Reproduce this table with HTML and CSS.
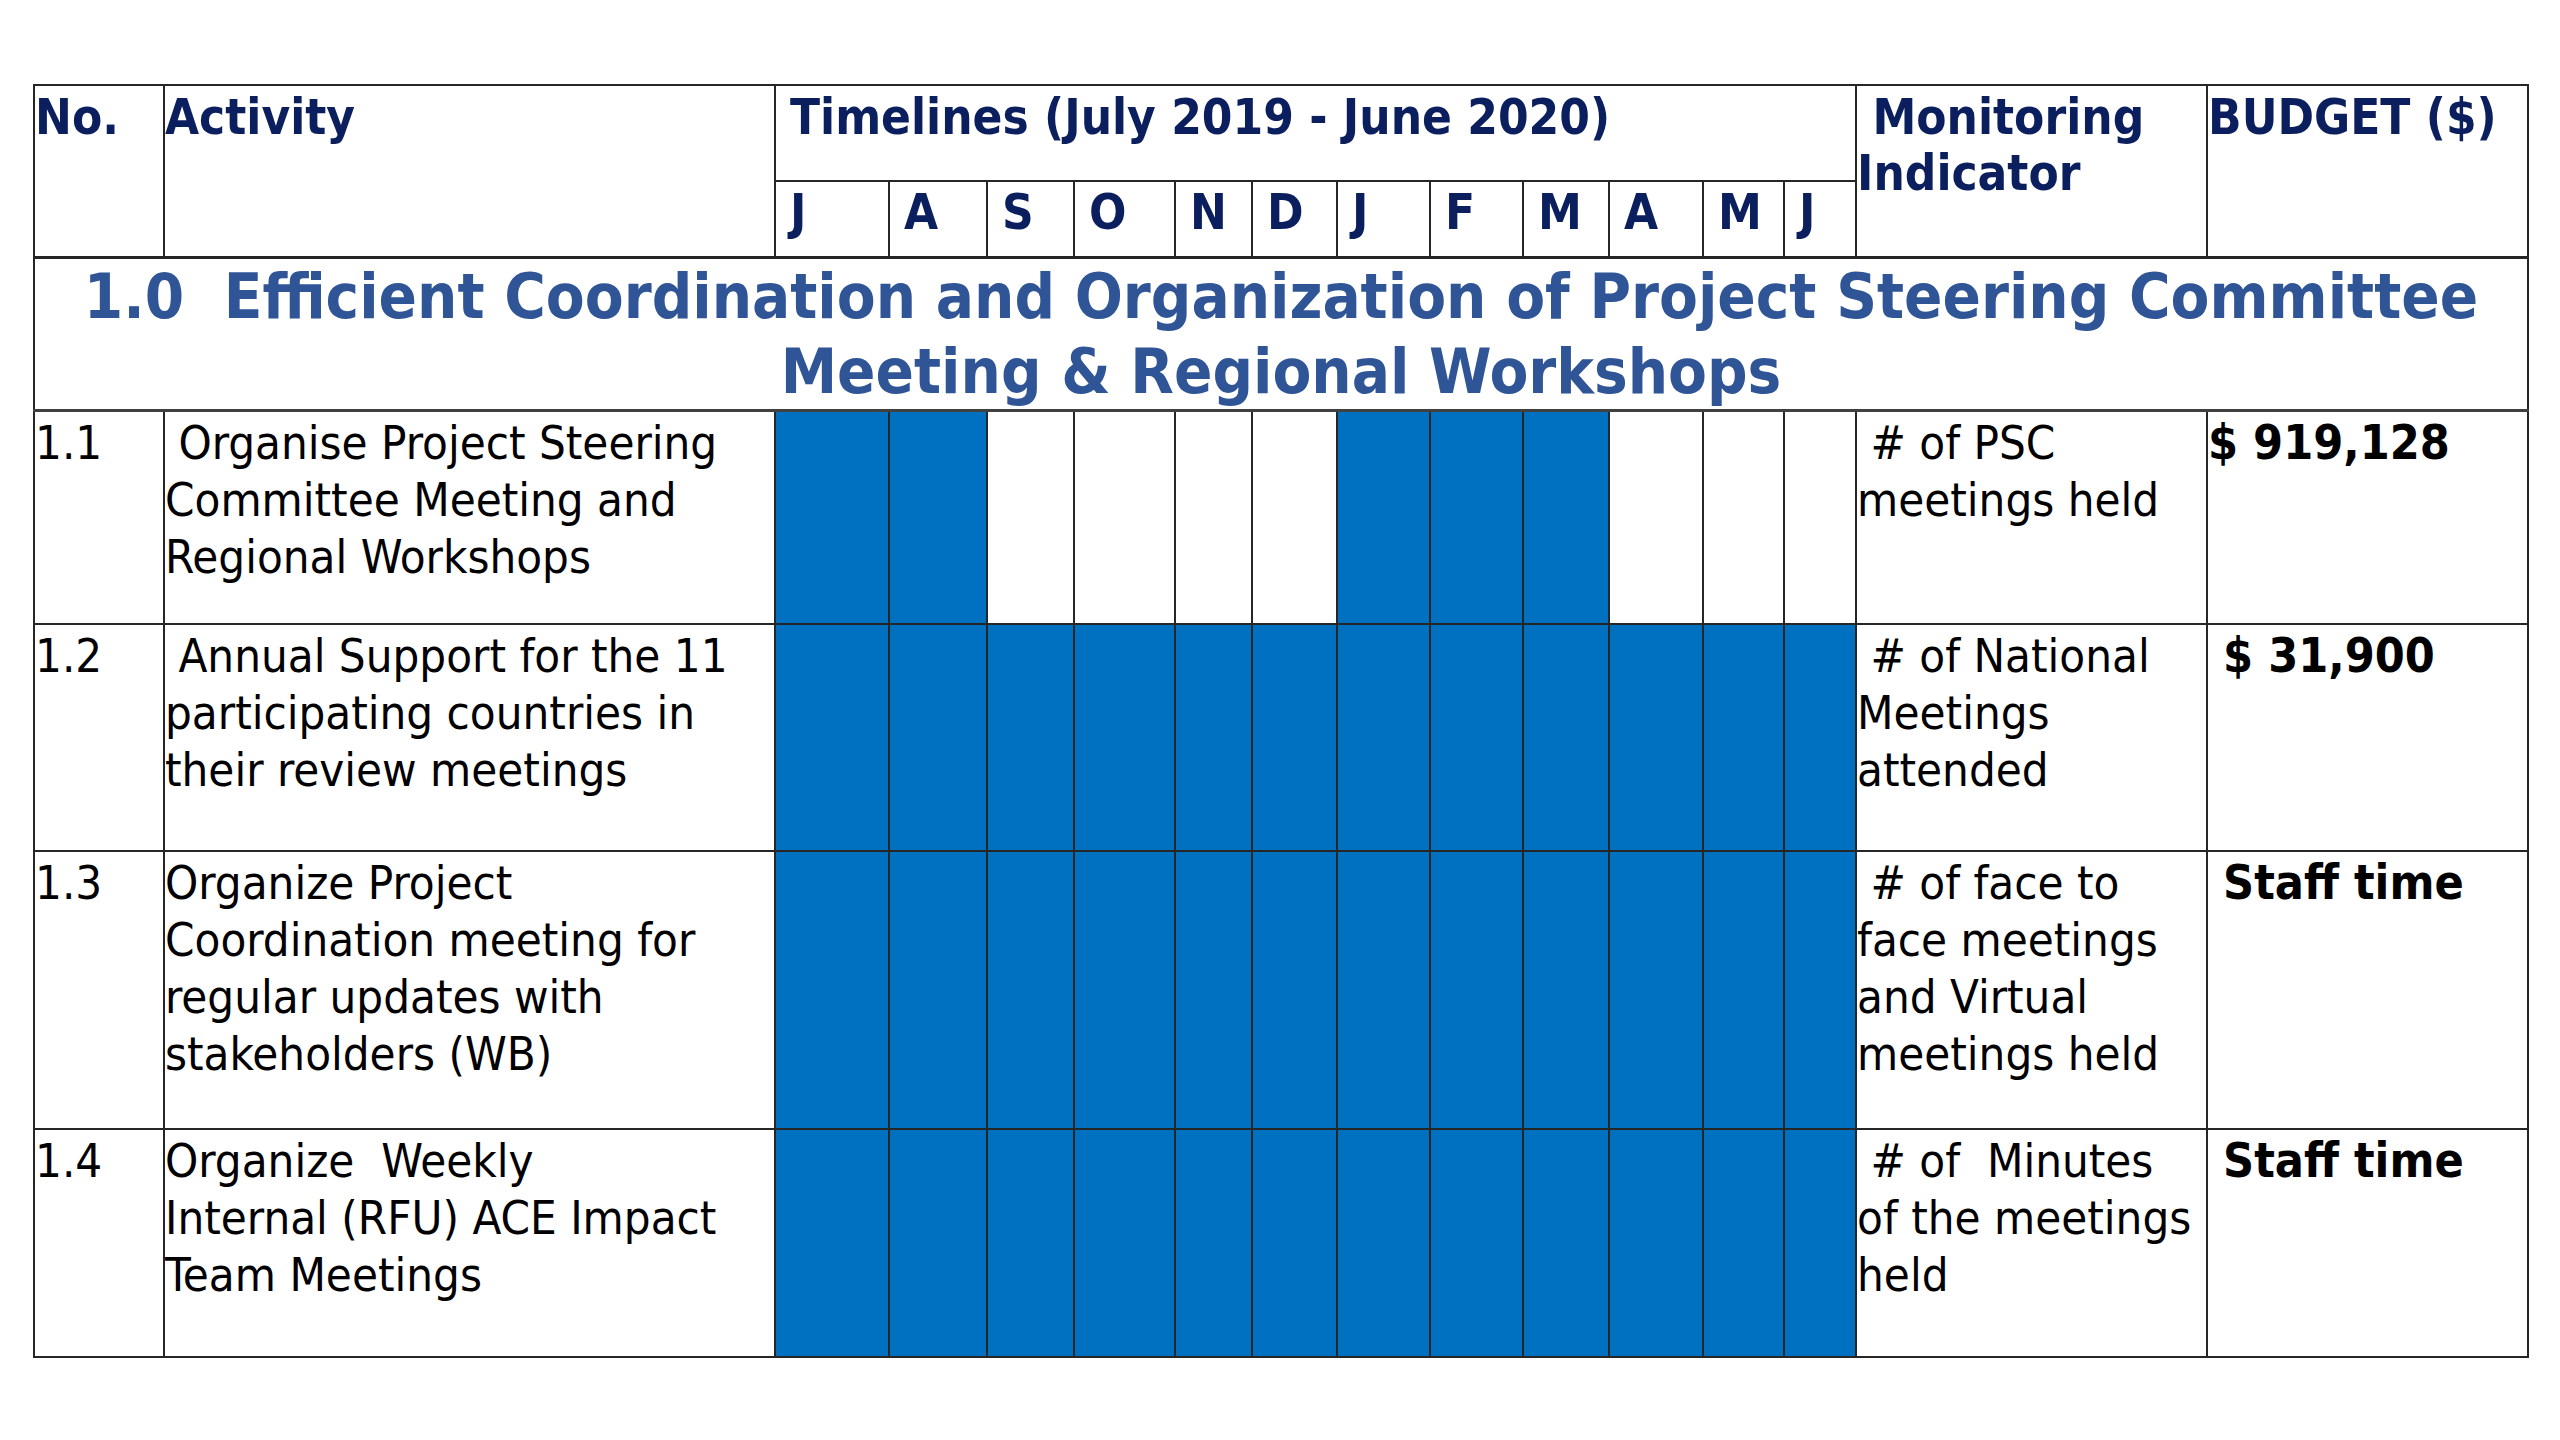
FILE: index.html
```html
<!DOCTYPE html>
<html lang="en">
<head>
<meta charset="utf-8">
<title>Work Plan</title>
<link rel="stylesheet" href="styles.css">
</head>
<body>
<table class="plan">
  <colgroup>
    <col class="c-no"><col class="c-act">
    <col class="m1"><col class="m2"><col class="m3"><col class="m4"><col class="m5"><col class="m6">
    <col class="m7"><col class="m8"><col class="m9"><col class="m10"><col class="m11"><col class="m12">
    <col class="c-mon"><col class="c-bud">
  </colgroup>
  <tr class="h1">
    <th rowspan="2" class="hd">No.</th>
    <th rowspan="2" class="hd">Activity</th>
    <th colspan="12" class="hd tl">Timelines (July 2019 - June 2020)</th>
    <th rowspan="2" class="hd">&nbsp;Monitoring<br>Indicator</th>
    <th rowspan="2" class="hd">BUDGET ($)</th>
  </tr>
  <tr class="h2">
    <th class="mo">J</th><th class="mo">A</th><th class="mo">S</th><th class="mo">O</th><th class="mo">N</th><th class="mo">D</th>
    <th class="mo">J</th><th class="mo">F</th><th class="mo">M</th><th class="mo">A</th><th class="mo">M</th><th class="mo">J</th>
  </tr>
  <tr class="sec">
    <td colspan="16" class="sec-title">1.0&nbsp; Efficient Coordination and Organization of Project Steering Committee<br>Meeting &amp; Regional Workshops</td>
  </tr>
  <tr class="r1">
    <td class="no">1.1</td>
    <td class="act">&nbsp;Organise Project Steering<br>Committee Meeting and<br>Regional Workshops</td>
    <td class="on"></td><td class="on"></td><td></td><td></td><td></td><td></td>
    <td class="on"></td><td class="on"></td><td class="on"></td><td></td><td></td><td></td>
    <td class="mon">&nbsp;# of PSC<br>meetings held</td>
    <td class="bud">$ 919,128</td>
  </tr>
  <tr class="r2">
    <td class="no">1.2</td>
    <td class="act">&nbsp;Annual Support for the 11<br>participating countries in<br>their review meetings</td>
    <td class="on"></td><td class="on"></td><td class="on"></td><td class="on"></td><td class="on"></td><td class="on"></td>
    <td class="on"></td><td class="on"></td><td class="on"></td><td class="on"></td><td class="on"></td><td class="on"></td>
    <td class="mon">&nbsp;# of National<br>Meetings<br>attended</td>
    <td class="bud">&nbsp;$ 31,900</td>
  </tr>
  <tr class="r3">
    <td class="no">1.3</td>
    <td class="act">Organize Project<br>Coordination meeting for<br>regular updates with<br>stakeholders (WB)</td>
    <td class="on"></td><td class="on"></td><td class="on"></td><td class="on"></td><td class="on"></td><td class="on"></td>
    <td class="on"></td><td class="on"></td><td class="on"></td><td class="on"></td><td class="on"></td><td class="on"></td>
    <td class="mon">&nbsp;# of face to<br>face meetings<br>and Virtual<br>meetings held</td>
    <td class="bud">&nbsp;Staff time</td>
  </tr>
  <tr class="r4">
    <td class="no">1.4</td>
    <td class="act">Organize&nbsp; Weekly<br>Internal (RFU) ACE Impact<br>Team Meetings</td>
    <td class="on"></td><td class="on"></td><td class="on"></td><td class="on"></td><td class="on"></td><td class="on"></td>
    <td class="on"></td><td class="on"></td><td class="on"></td><td class="on"></td><td class="on"></td><td class="on"></td>
    <td class="mon">&nbsp;# of&nbsp; Minutes<br>of the meetings<br>held</td>
    <td class="bud">&nbsp;Staff time</td>
  </tr>
</table>
</body>
</html>
```

FILE: styles.css
```css
html, body {
  margin: 0;
  padding: 0;
  background: #ffffff;
}

body {
  padding: 84px 0 0 33px;
  font-family: "DejaVu Sans Condensed", "DejaVu Sans", sans-serif;
  font-stretch: condensed;
  color: #000;
}

.plan {
  border-collapse: collapse;
  table-layout: fixed;
  width: 2494px;
}

.c-no { width: 130px; }
.c-act { width: 611px; }
.m1 { width: 114px; }
.m2 { width: 98px; }
.m3 { width: 87px; }
.m4 { width: 101px; }
.m5 { width: 77px; }
.m6 { width: 85px; }
.m7 { width: 93px; }
.m8 { width: 93px; }
.m9 { width: 86px; }
.m10 { width: 94px; }
.m11 { width: 81px; }
.m12 { width: 72px; }
.c-mon { width: 351px; }
.c-bud { width: 321px; }

.plan th,
.plan td {
  border: 2px solid #262626;
  padding: 0;
  vertical-align: top;
  text-align: left;
  overflow: hidden;
}

.h1 { height: 96px; }
.h2 { height: 76px; }
.sec { height: 152px; }
.r1 { height: 214px; }
.r2 { height: 227px; }
.r3 { height: 278px; }
.r4 { height: 228px; }

.plan .hd {
  color: #0b1f5e;
  font-weight: bold;
  font-size: 49px;
  line-height: 56px;
  padding: 4px 0 0 0;
  white-space: nowrap;
}

.plan .hd.tl {
  padding-left: 14px;
}

.plan .h1 .hd[rowspan] {
  border-bottom: 3px solid #262626;
}

.plan .mo {
  color: #0b1f5e;
  font-weight: bold;
  font-size: 49px;
  line-height: 56px;
  padding: 3px 0 0 14px;
  border-bottom: 3px solid #262626;
}

.plan .sec-title {
  color: #2f5597;
  font-weight: bold;
  font-size: 63px;
  line-height: 75px;
  text-align: center;
  padding: 0;
  vertical-align: middle;
  border-bottom: 3px solid #404040;
  white-space: nowrap;
}

.plan .no,
.plan .act,
.plan .mon {
  font-size: 47px;
  line-height: 57px;
  padding: 2px 0 0 0;
  white-space: nowrap;
}

.plan .bud {
  font-size: 48px;
  line-height: 57px;
  padding: 2px 0 0 0;
  font-weight: bold;
  white-space: nowrap;
}

.plan td.on {
  background: #0070c0;
}
```
